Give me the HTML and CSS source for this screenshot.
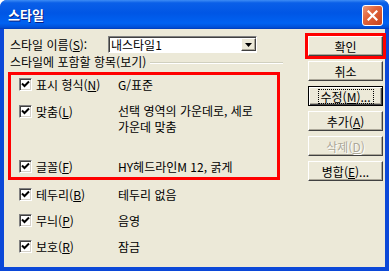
FILE: index.html
```html
<!DOCTYPE html>
<html lang="ko">
<head>
    <meta charset="UTF-8">
    <title>스타일</title>
    <link rel="stylesheet" href="styles.css">
</head>
<body>
    <div class="window">
        <div class="titlebar">
            <span class="title">스타일</span>
            <span class="close-btn">
                <svg width="11" height="11" viewBox="0 0 11 11"><path d="M1.5 1.5 L9.5 9.5 M9.5 1.5 L1.5 9.5" stroke="#fff" stroke-width="2.2" stroke-linecap="square"/></svg>
            </span>
        </div>
        <div class="client">
            <div class="left">
                <div class="name-row">
                    <span class="name-label">스타일 이름(<u>S</u>):</span>
                    <div class="combo">
                        <span class="combo-value">내스타일1</span>
                        <span class="combo-arrow">
                            <svg width="7" height="4" viewBox="0 0 7 4"><path d="M0 0 H7 L3.5 4 Z" fill="#000"/></svg>
                        </span>
                    </div>
                </div>

                <div class="group-title"><span>스타일에 포함할 항목(보기)</span></div>

                <div class="items marked">
                    <div class="item r1">
                        <span class="check"><svg width="9" height="9" viewBox="0 0 9 9"><path d="M1 3.5 L3.5 6 L8 1.5" fill="none" stroke="#000" stroke-width="2"/></svg></span>
                        <span class="item-label">표시 형식(<u>N</u>)</span>
                        <span class="item-value">G/표준</span>
                    </div>
                    <div class="item r2">
                        <span class="check"><svg width="9" height="9" viewBox="0 0 9 9"><path d="M1 3.5 L3.5 6 L8 1.5" fill="none" stroke="#000" stroke-width="2"/></svg></span>
                        <span class="item-label">맞춤(<u>L</u>)</span>
                        <span class="item-value two-line">선택 영역의 가운데로, 세로<br>가운데 맞춤</span>
                    </div>
                    <div class="item r3">
                        <span class="check"><svg width="9" height="9" viewBox="0 0 9 9"><path d="M1 3.5 L3.5 6 L8 1.5" fill="none" stroke="#000" stroke-width="2"/></svg></span>
                        <span class="item-label">글꼴(<u>F</u>)</span>
                        <span class="item-value">HY헤드라인M 12, 굵게</span>
                    </div>
                </div>

                <div class="items plain">
                    <div class="item r4">
                        <span class="check"><svg width="9" height="9" viewBox="0 0 9 9"><path d="M1 3.5 L3.5 6 L8 1.5" fill="none" stroke="#000" stroke-width="2"/></svg></span>
                        <span class="item-label">테두리(<u>B</u>)</span>
                        <span class="item-value">테두리 없음</span>
                    </div>
                    <div class="item r5">
                        <span class="check"><svg width="9" height="9" viewBox="0 0 9 9"><path d="M1 3.5 L3.5 6 L8 1.5" fill="none" stroke="#000" stroke-width="2"/></svg></span>
                        <span class="item-label">무늬(<u>P</u>)</span>
                        <span class="item-value">음영</span>
                    </div>
                    <div class="item r6">
                        <span class="check"><svg width="9" height="9" viewBox="0 0 9 9"><path d="M1 3.5 L3.5 6 L8 1.5" fill="none" stroke="#000" stroke-width="2"/></svg></span>
                        <span class="item-label">보호(<u>R</u>)</span>
                        <span class="item-value">잠금</span>
                    </div>
                </div>
            </div>

            <div class="buttons">
                <button class="btn marked-btn">확인</button>
                <button class="btn">취소</button>
                <button class="btn default-btn"><span class="focus">수정(<u>M</u>)...</span></button>
                <button class="btn">추가(<u>A</u>)</button>
                <button class="btn" disabled>삭제(<u>D</u>)</button>
                <button class="btn">병합(<u>E</u>)...</button>
            </div>
        </div>
    </div>
</body>
</html>
```

FILE: styles.css
```css
body {
    margin: 0;
    background: #fff;
    font-family: "Noto Sans CJK KR", "Noto Sans", sans-serif;
    font-size: 12px;
    color: #000;
}
.window {
    width: 389px;
    height: 271px;
    box-sizing: border-box;
    border-radius: 7px 7px 0 0;
    background: #0b48d8;
    overflow: hidden;
}
.titlebar {
    height: 29px;
    display: flex;
    align-items: center;
    justify-content: space-between;
    padding: 0 6px 0 8px;
    background: linear-gradient(to bottom, #3d8cf5 0%, #0a5fe8 10%, #0056e5 45%, #0062f2 80%, #0050d8 94%, #003cb8 100%);
}
.title {
    color: #fff;
    font-weight: bold;
    font-size: 13px;
    text-shadow: 1px 1px #0a1e80;
    margin-top: -1px;
}
.close-btn {
    width: 19px;
    height: 19px;
    border: 1px solid #fff;
    border-radius: 3px;
    display: flex;
    align-items: center;
    justify-content: center;
    background: linear-gradient(135deg, #ec9a7a 0%, #e0643c 40%, #c8431c 100%);
    margin-top: 1px;
}
.client {
    height: 238px;
    margin: 0 4px;
    background: #ece9d8;
    display: flex;
}
.left {
    width: 272px;
    padding-left: 4px;
}
.name-row {
    margin-top: 7px;
    height: 17px;
    display: flex;
    align-items: center;
}
.name-label {
    width: 98px;
    padding-left: 2px;
}
.combo {
    width: 149px;
    height: 17px;
    box-sizing: border-box;
    background: #fff;
    border: 1px solid;
    border-color: #808080 #fff #fff #808080;
    box-shadow: inset 1px 1px #404040;
    display: flex;
    align-items: center;
    justify-content: space-between;
}
.combo-value {
    padding-left: 2px;
    line-height: 13px;
}
.combo-arrow {
    width: 15px;
    height: 13px;
    box-sizing: border-box;
    background: #ece9d8;
    border: 1px solid;
    border-color: #fff #404040 #404040 #fff;
    box-shadow: inset -1px -1px #aca899;
    display: flex;
    align-items: center;
    justify-content: center;
}
.group-title {
    margin-top: 2px;
    height: 14px;
    line-height: 14px;
    display: flex;
    align-items: center;
    padding-left: 2px;
    margin-right: -3px;
}
.group-title::after {
    content: "";
    flex: 1;
    margin-left: 4px;
    margin-top: 2px;
    border-top: 1px solid #d0d0bf;
    border-bottom: 1px solid #fff;
}
.items {
    width: 272px;
    box-sizing: border-box;
    border: 3px solid transparent;
    padding: 0 8px;
}
.items.marked {
    margin-top: 3px;
    border-color: #ff0000;
}
.items.plain {
    border-top: 0;
    padding-top: 5px;
}
.item {
    display: flex;
    align-items: flex-start;
    padding-top: 3px;
    box-sizing: border-box;
    line-height: 13px;
}
.r1 { height: 27px; }
.r2 { height: 55px; }
.r3 { height: 20px; }
.r4 { height: 26px; }
.r5 { height: 26px; }
.r6 { height: 26px; }
.check {
    width: 13px;
    height: 13px;
    box-sizing: border-box;
    background: #fff;
    border: 1px solid;
    border-color: #808080 #fff #fff #808080;
    box-shadow: inset 1px 1px #404040, inset -1px -1px #d4d0c8;
    display: flex;
    align-items: center;
    justify-content: center;
    margin-right: 4px;
}
.item-label {
    width: 82px;
}
.two-line {
    line-height: 16px;
    margin-top: -2px;
}
.buttons {
    margin-left: 28px;
    padding-top: 7px;
    display: flex;
    flex-direction: column;
    gap: 5px;
}
.btn {
    width: 75px;
    height: 20px;
    padding: 0;
    box-sizing: border-box;
    font-family: inherit;
    font-size: 12px;
    line-height: 13px;
    color: #000;
    background: #ece9d8;
    border: 1px solid;
    border-color: #fff #404040 #404040 #fff;
    box-shadow: inset -1px -1px #aca899;
}
.marked-btn {
    outline: 3px solid #ff0000;
}
.default-btn {
    border: 1px solid #000;
    box-shadow: inset 1px 1px #fff, inset -1px -1px #404040, inset -2px -2px #aca899;
}
.focus {
    display: inline-block;
    padding: 0 2px;
    border: 1px dotted #000;
}
.btn:disabled {
    color: #aca899;
    text-shadow: 1px 1px #fff;
}
```
